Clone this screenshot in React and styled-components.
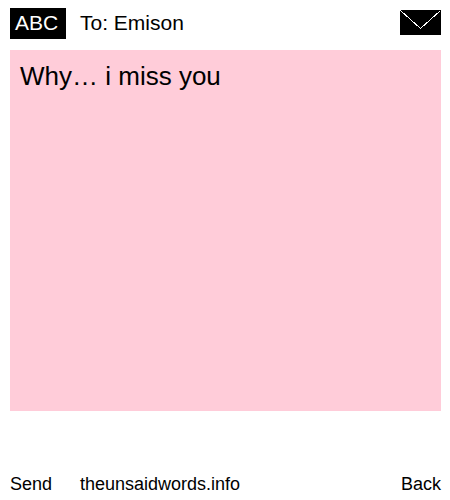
import { useState } from "react";
import { createGlobalStyle, styled } from "styled-components";

const App = () => {
  const [message, setMessage] = useState("Why… i miss you");

  return (
    <Page>
      <GlobalStyle />
      <Header>
        <Badge>ABC</Badge>
        <Recipient>To: Emison</Recipient>
        <Envelope viewBox="0 0 41 25" aria-hidden="true">
          <rect width="41" height="25" fill="#000" />
          <path
            d="M0.5 0.5 L20.5 18.5 L40.5 0.5"
            fill="none"
            stroke="#fff"
            shapeRendering="crispEdges"
          />
        </Envelope>
      </Header>
      <Message
        aria-label="Message"
        spellCheck={false}
        value={message}
        onChange={(e) => setMessage(e.target.value)}
      />
      <Footer>
        <Action type="button">Send</Action>
        <SiteLink href="#">theunsaidwords.info</SiteLink>
        <Action type="button">Back</Action>
      </Footer>
    </Page>
  );
};

const GlobalStyle = createGlobalStyle`
  * {
    box-sizing: border-box;
  }

  body {
    margin: 0;
    background-color: #fff;
    color: #000;
    font-family: "Liberation Sans", Arial, sans-serif;
  }
`;

const Page = styled.div`
  display: flex;
  flex-direction: column;
  min-height: 100vh;
  padding: 8px 9px 3px 10px;
`;

const Header = styled.header`
  display: grid;
  grid-template-columns: 70px 1fr auto;
  align-items: start;
  margin-bottom: 11px;
  font-size: 21px;
  line-height: 29px;
`;

const Badge = styled.div`
  justify-self: start;
  width: 56px;
  padding: 0 0 2px 5px;
  background-color: #000;
  color: #fff;
`;

const Recipient = styled.div``;

const Envelope = styled.svg`
  width: 41px;
  height: 25px;
  margin-top: 2px;
`;

const Message = styled.textarea`
  flex: 1;
  width: 100%;
  margin-bottom: 61px;
  padding: 10px;
  border: none;
  border-radius: 0;
  outline: none;
  resize: none;
  background-color: #ffccd9;
  color: #000;
  font-family: inherit;
  font-size: 26px;
  line-height: 33px;
`;

const Footer = styled.footer`
  display: grid;
  grid-template-columns: 70px 1fr auto;
  align-items: center;
  font-size: 18px;
  line-height: 25px;
`;

const Action = styled.button`
  justify-self: start;
  padding: 0;
  border: none;
  background: none;
  color: inherit;
  font: inherit;
  cursor: pointer;
`;

const SiteLink = styled.a`
  color: inherit;
  text-decoration: none;
`;

export default App;
